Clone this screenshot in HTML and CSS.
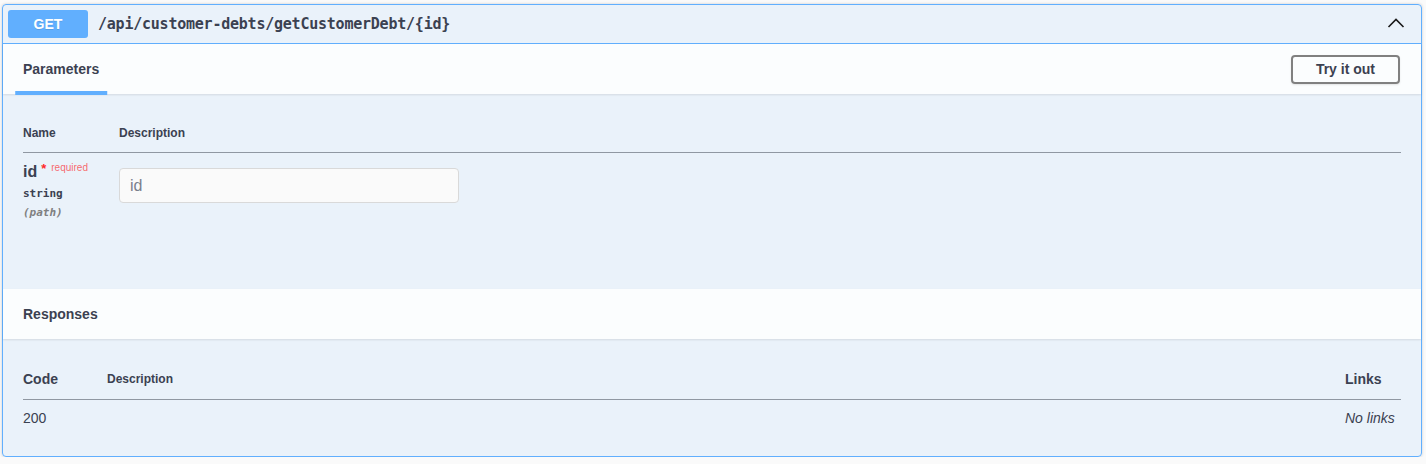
FILE: index.html
```html
<!DOCTYPE html>
<html>
<head>
<meta charset="utf-8">
<link rel="stylesheet" href="styles.css">
</head>
<body>
<div class="wrap">
  <div class="opblock">
    <div class="summary">
      <span class="method">GET</span>
      <span class="path">/api/customer-debts/getCustomerDebt/{id}</span>
      <svg class="arrow" width="20" height="20" viewBox="0 0 20 20"><polyline points="2.5,14 10,6.5 17.5,14" fill="none" stroke="#1a1a1a" stroke-width="1.6"/></svg>
    </div>
    <div class="section-header">
      <div class="tab"><h4><span>Parameters</span></h4></div>
      <button class="try">Try it out</button>
    </div>
    <div class="params">
      <table class="ptable">
        <thead>
          <tr><th class="col-name">Name</th><th>Description</th></tr>
        </thead>
        <tbody>
          <tr>
            <td class="col-name">
              <div class="pname"><b>id</b><span class="star">*</span><span class="req">required</span></div>
              <div class="ptype">string</div>
              <div class="pin">(path)</div>
            </td>
            <td><input class="pinput" type="text" placeholder="id"></td>
          </tr>
        </tbody>
      </table>
    </div>
    <div class="section-header resp-header">
      <h4 class="resp-title">Responses</h4>
    </div>
    <div class="responses">
      <table class="rtable">
        <thead>
          <tr><th class="col-code">Code</th><th class="col-desc">Description</th><th class="col-links">Links</th></tr>
        </thead>
        <tbody>
          <tr><td class="col-code">200</td><td class="col-desc"></td><td class="col-links nolinks">No links</td></tr>
        </tbody>
      </table>
    </div>
  </div>
</div>
</body>
</html>
```
FILE: styles.css
```css
html, body {
  margin: 0;
  padding: 0;
  background: #fafafa;
}
body {
  font-family: "Liberation Sans", Arial, sans-serif;
  color: #3b4151;
}
.wrap {
  padding: 4px 4px 0 2px;
}
.opblock {
  border: 1px solid #61affe;
  border-radius: 4px;
  background: rgba(97, 175, 254, 0.1);
  box-shadow: 0 0 3px rgba(0, 0, 0, 0.19);
}
.summary {
  display: flex;
  align-items: center;
  padding: 5px;
  border-bottom: 1px solid #61affe;
}
.method {
  display: inline-block;
  min-width: 80px;
  padding: 6px 0;
  line-height: 16px;
  background: #61affe;
  color: #fff;
  border-radius: 3px;
  font-size: 14px;
  font-weight: 700;
  text-align: center;
  text-shadow: 0 1px 0 rgba(0,0,0,.1);
}
.path {
  flex: 1;
  padding: 0 10px;
  font-family: "DejaVu Sans Mono", "Liberation Mono", monospace;
  font-size: 15px;
  letter-spacing: -0.23px;
  font-weight: 700;
  color: #3b4151;
}
.arrow {
  margin-right: 10px;
  margin-top: -2px;
}
.section-header {
  display: flex;
  align-items: center;
  justify-content: space-between;
  min-height: 50px;
  box-sizing: border-box;
  padding: 0 20px;
  background: rgba(255, 255, 255, 0.8);
  box-shadow: 0 1px 2px rgba(0, 0, 0, 0.1);
}
.tab h4 {
  margin: 0;
  font-size: 14px;
  font-weight: 700;
}
.tab span {
  position: relative;
  display: inline-block;
}
.tab span::after {
  content: "";
  position: absolute;
  left: 50%;
  bottom: -18px;
  width: 120%;
  height: 4px;
  background: #61affe;
  transform: translateX(-50%);
}
.try {
  font-family: "Liberation Sans", Arial, sans-serif;
  font-size: 14px;
  font-weight: 700;
  color: #3b4151;
  background: transparent;
  border: 2px solid #808080;
  border-radius: 4px;
  padding: 5px 23px;
  line-height: 15px;
  margin-right: 1px;
  box-shadow: 0 1px 2px rgba(0,0,0,.1);
}
.params {
  padding: 20px 20px 59px;
}
table {
  width: 100%;
  border-collapse: collapse;
}
th {
  text-align: left;
  padding: 12px 0;
  font-size: 12px;
  font-weight: 700;
  line-height: 14px;
  border-bottom: 1px solid rgba(59, 65, 81, 0.3);
}
.ptable .col-name {
  width: 96px;
}
.ptable td {
  padding: 10px 0;
  vertical-align: top;
}
.pname {
  font-size: 16px;
  line-height: 18px;
  white-space: nowrap;
}
.pname b {
  font-weight: 700;
}
.star {
  color: #ff2a2a;
  font-size: 13px;
  font-weight: 700;
  position: relative;
  top: -4px;
  margin-left: 4px;
}
.req {
  color: rgba(255, 0, 0, 0.6);
  font-size: 10px;
  position: relative;
  top: -6px;
  padding-left: 5px;
}
.ptype {
  font-family: "DejaVu Sans Mono", "Liberation Mono", monospace;
  font-size: 11px;
  font-weight: 700;
  line-height: 14px;
  padding: 4px 0 5px;
}
.pin {
  font-family: "DejaVu Sans Mono", "Liberation Mono", monospace;
  font-size: 11px;
  font-weight: 700;
  font-style: italic;
  line-height: 14px;
  color: #808080;
}
.pinput {
  display: block;
  box-sizing: border-box;
  width: 340px;
  height: 35px;
  margin: 5px 0;
  padding: 8px 10px;
  font-family: "Liberation Sans", Arial, sans-serif;
  font-size: 16px;
  color: #3b4151;
  background: #fafafa;
  border: 1px solid #d9d9d9;
  border-radius: 4px;
  outline: none;
}
.pinput::placeholder {
  color: #7a7f8c;
}
.resp-title {
  margin: 0;
  font-size: 14px;
  font-weight: 700;
}
.responses {
  padding: 20px;
}
.rtable th.col-code,
.rtable th.col-links {
  font-size: 14px;
  line-height: 16px;
}
.rtable th.col-desc {
  font-weight: 600;
}
.rtable .col-code {
  width: 84px;
}
.rtable .col-links {
  width: 56px;
}
.rtable td {
  padding: 10px 0;
  font-size: 14px;
  line-height: 16px;
  vertical-align: top;
}
.nolinks {
  font-style: italic;
}
```
